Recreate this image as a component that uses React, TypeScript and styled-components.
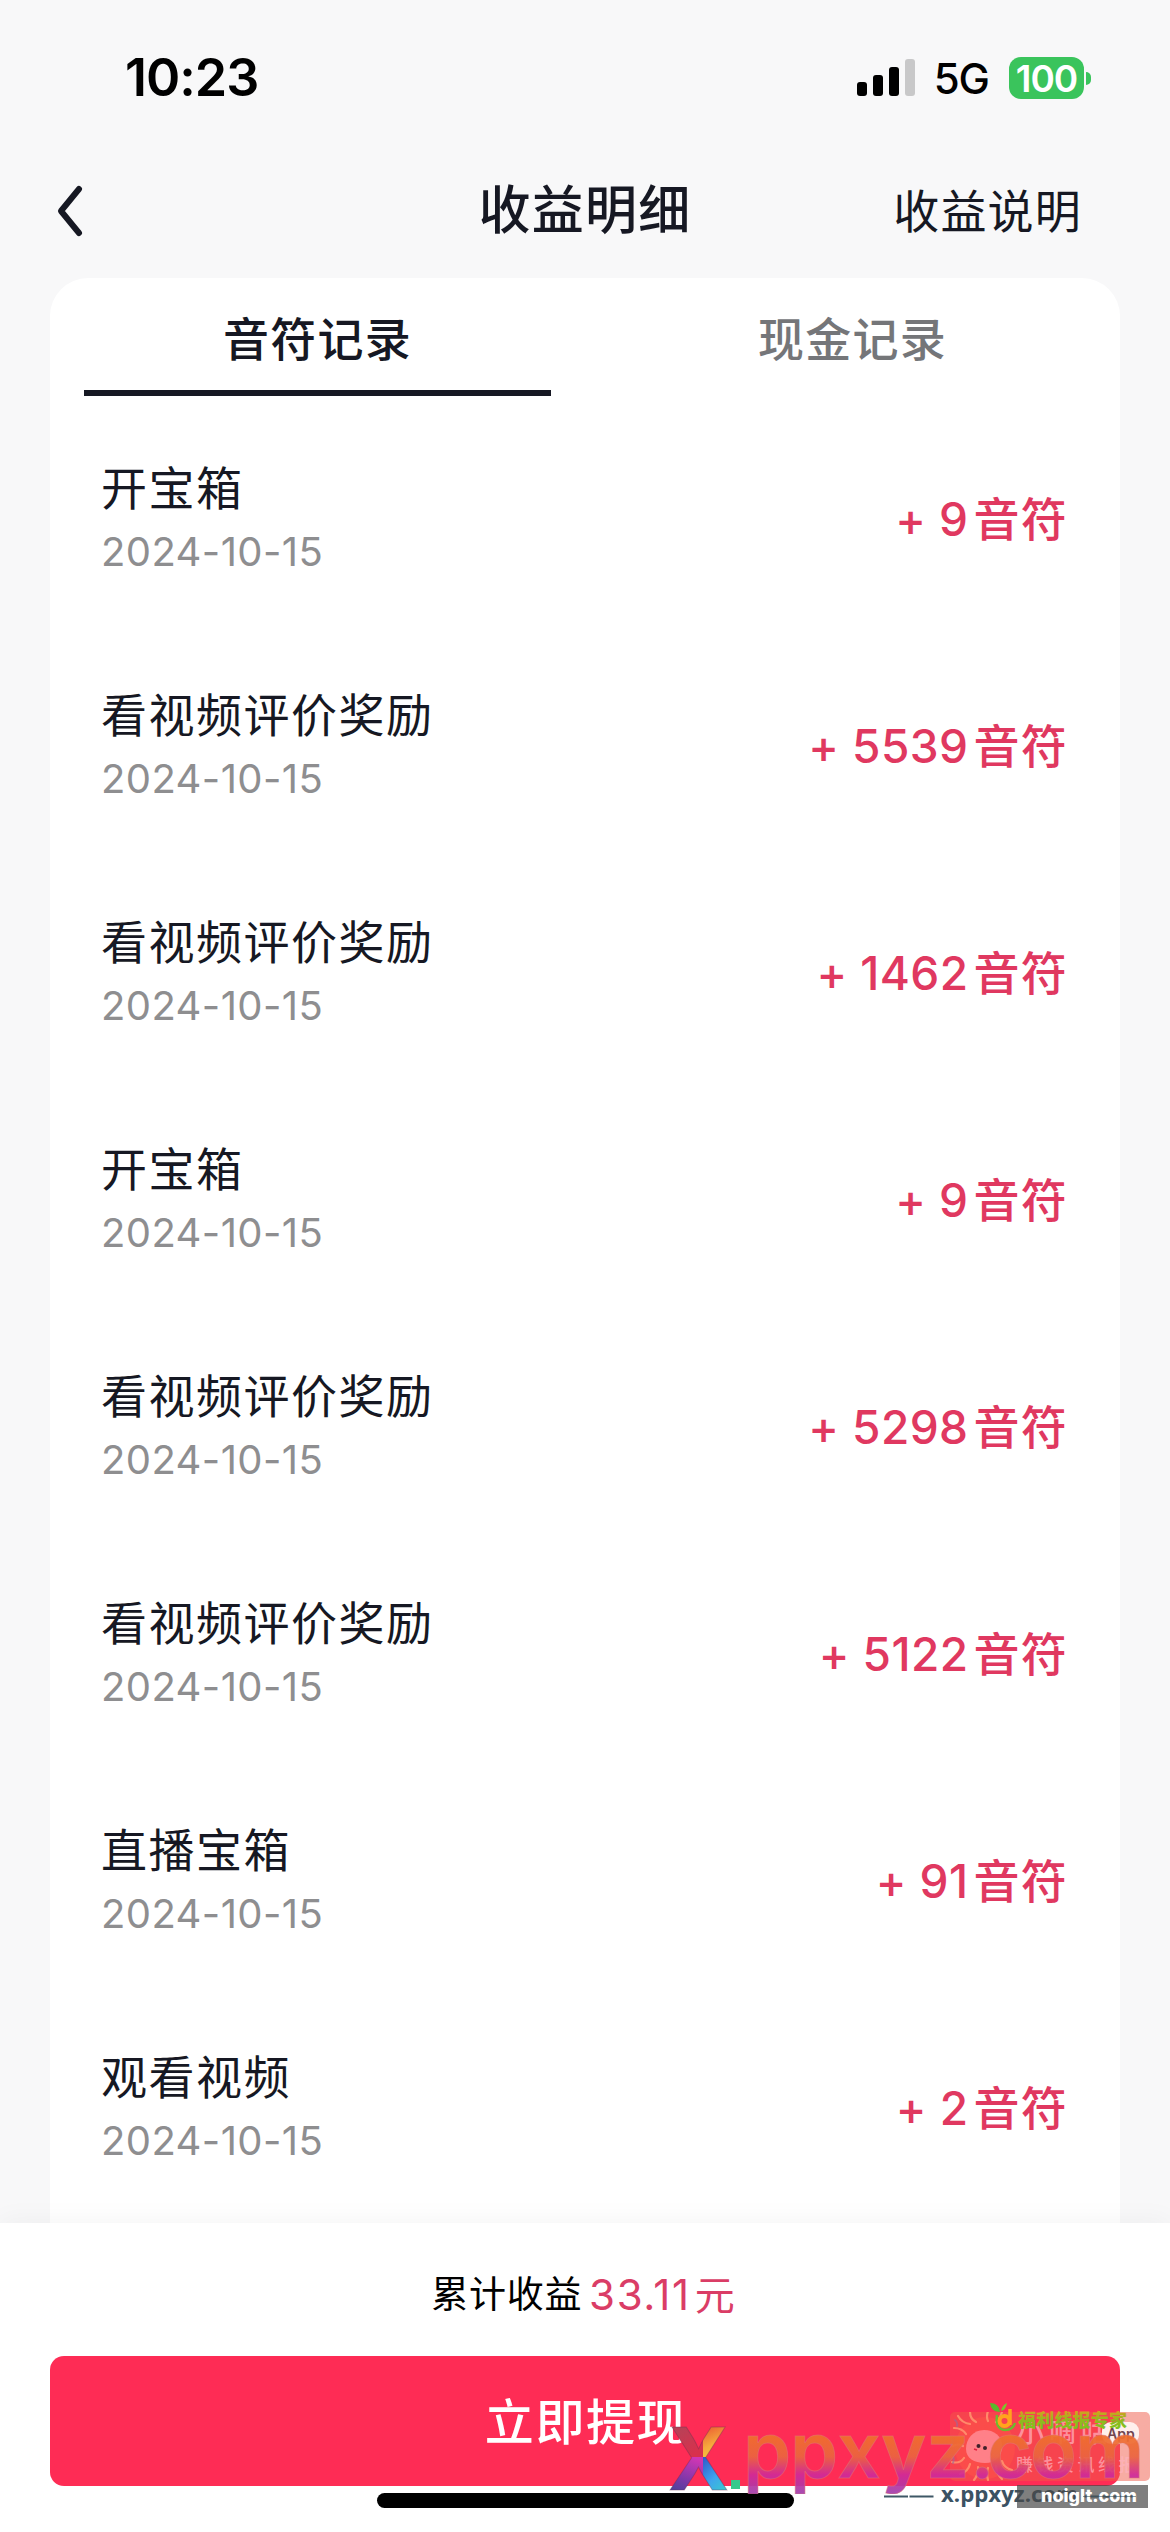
import React from "react";
import styled, { createGlobalStyle } from "styled-components";

const Global = createGlobalStyle`
  * { box-sizing: border-box; }
  body { margin: 0; background: #f8f8f9; }
`;

const Screen = styled.div`
  position: relative;
  display: flex;
  flex-direction: column;
  width: 1170px;
  height: 2532px;
  overflow: hidden;
  background: #f8f8f9;
  color: #161823;
  font-family: Inter, "Noto Sans CJK SC", sans-serif;
`;

const StatusBar = styled.header`
  display: flex;
  align-items: center;
  justify-content: space-between;
  height: 156px;
  padding: 0 79px 0 125px;
  color: #000;
`;

const Clock = styled.span`
  font-size: 52px;
  font-weight: 600;
  line-height: 60px;
  letter-spacing: -1px;
`;

const StatusIcons = styled.div`
  display: flex;
  align-items: center;
`;

const Network = styled.span`
  margin: 2px 20px 0 18px;
  font-size: 42px;
  font-weight: 500;
  line-height: 50px;
  letter-spacing: -1px;
`;

const Battery = styled.div`
  display: flex;
  align-items: center;
  justify-content: center;
  width: 75px;
  height: 42px;
  border-radius: 12px;
  background: #3ac45c;
  color: #fff;
  font-size: 37px;
  font-weight: 600;
  letter-spacing: -1px;
`;

const BatteryTip = styled.div`
  width: 5px;
  height: 13px;
  margin-left: 2px;
  border-radius: 0 6px 6px 0;
  background: #3ac45c;
`;

const NavBar = styled.nav`
  display: grid;
  grid-template-columns: 1fr auto 1fr;
  align-items: center;
  height: 122px;
  padding: 0 88px 12px 54px;
`;

const BackButton = styled.button`
  display: flex;
  padding: 0;
  border: 0;
  background: none;
`;

const Title = styled.h1`
  margin: 0 -34px 0 0;
  font-size: 52px;
  font-weight: 500;
  line-height: 70px;
  letter-spacing: 1.3px;
`;

const HelpLink = styled.a`
  justify-self: end;
  font-size: 46px;
  line-height: 66px;
  letter-spacing: 1.2px;
`;

const Card = styled.main`
  flex: 1;
  min-height: 0;
  margin: 0 50px;
  overflow: hidden;
  border-radius: 38px 38px 0 0;
  background: #fff;
`;

const Tabs = styled.div`
  display: grid;
  grid-template-columns: 1fr 1fr;
  height: 118px;
`;

const Tab = styled.button<{ $active?: boolean }>`
  margin: 0 34px;
  padding: 10px 0 0;
  border: 0;
  border-bottom: 6px solid ${(p) => (p.$active ? "#161823" : "transparent")};
  background: none;
  color: ${(p) => (p.$active ? "#161823" : "#757679")};
  font: 500 46px/66px Inter, "Noto Sans CJK SC", sans-serif;
  letter-spacing: 1.2px;
`;

const Records = styled.ul`
  margin: 0;
  padding: 9px 0 0;
  list-style: none;
`;

const Record = styled.li`
  display: flex;
  align-items: center;
  justify-content: space-between;
  height: 227px;
  padding: 0 52px 0 51px;
`;

const RecordName = styled.div`
  font-size: 46px;
  line-height: 66px;
  letter-spacing: 1.5px;
`;

const RecordDate = styled.div`
  color: #8e8e90;
  font-size: 40px;
  line-height: 62px;
  letter-spacing: 0.4px;
`;

const Amount = styled.div`
  display: flex;
  align-items: center;
  color: #e03860;
  font-size: 46px;
  font-weight: 500;
  line-height: 66px;
`;

const Points = styled.span`
  margin-right: 5px;
  letter-spacing: 0.4px;
`;

const Unit = styled.span`
  letter-spacing: 1.3px;
`;

const Footer = styled.footer`
  position: relative;
  height: 309px;
  padding: 41px 50px 0;
  background: #fff;
  box-shadow: 0 -2px 26px rgba(0, 0, 0, 0.045);
`;

const Total = styled.div`
  display: flex;
  justify-content: center;
  height: 92px;
  color: #000;
  font-size: 37px;
  line-height: 62px;
  letter-spacing: 0.7px;
`;

const TotalValue = styled.span`
  margin: 0 4px 0 7px;
  color: #da3d66;
  font-size: 42px;
  letter-spacing: 1.6px;
`;

const TotalUnit = styled.span`
  margin-left: 4px;
  font-size: 40px;
  letter-spacing: 0;
`;

const Withdraw = styled.button`
  display: block;
  width: 1070px;
  height: 130px;
  padding: 3px 0 0 2px;
  border: 0;
  border-radius: 14px;
  background: #fe2c55;
  color: #fff;
  font: 500 49px/127px Inter, "Noto Sans CJK SC", sans-serif;
  letter-spacing: 1.6px;
`;

const HomeIndicator = styled.div`
  width: 417px;
  height: 15px;
  margin: 7px auto 0;
  border-radius: 8px;
  background: #000;
`;

const Marks = styled.svg`
  position: absolute;
  left: 660px;
  top: 2392px;
`;

const records = [
  ["开宝箱", "9"],
  ["看视频评价奖励", "5539"],
  ["看视频评价奖励", "1462"],
  ["开宝箱", "9"],
  ["看视频评价奖励", "5298"],
  ["看视频评价奖励", "5122"],
  ["直播宝箱", "91"],
  ["观看视频", "2"],
];

const cjk = '"Noto Sans CJK SC", sans-serif';

function Watermarks() {
  return (
    <Marks width="510" height="140" viewBox="660 2392 510 140">
      <defs>
        <linearGradient id="word" x1="0" y1="2434" x2="0" y2="2494" gradientUnits="userSpaceOnUse">
          <stop offset="0" stopColor="#f0702a" />
          <stop offset="0.38" stopColor="#ea6440" />
          <stop offset="0.68" stopColor="#d02a98" />
          <stop offset="1" stopColor="#a040ac" />
        </linearGradient>
        <linearGradient id="rose" x1="0" y1="0" x2="0.6" y2="1">
          <stop offset="0" stopColor="#a84a5c" />
          <stop offset="1" stopColor="#d8304c" />
        </linearGradient>
        <linearGradient id="gold" x1="0.2" y1="0" x2="0.6" y2="1">
          <stop offset="0" stopColor="#e84a30" />
          <stop offset="0.6" stopColor="#f6a83c" />
          <stop offset="1" stopColor="#f6d040" />
        </linearGradient>
        <linearGradient id="sky" x1="0" y1="0" x2="0.8" y2="1">
          <stop offset="0" stopColor="#2f58c8" />
          <stop offset="0.5" stopColor="#3fa4ee" />
          <stop offset="1" stopColor="#36d6c4" />
        </linearGradient>
        <linearGradient id="violet" x1="0.7" y1="0" x2="0.3" y2="1">
          <stop offset="0" stopColor="#d036b4" />
          <stop offset="0.6" stopColor="#7a38a8" />
          <stop offset="1" stopColor="#3d4698" />
        </linearGradient>
        <pattern id="facets" x="664" y="2420" width="70" height="76" patternUnits="userSpaceOnUse">
          <path d="M0 0h41v37H0z" fill="url(#rose)" />
          <path d="M39 0h31v37H39z" fill="url(#gold)" />
          <path d="M0 37h41v39H0z" fill="url(#violet)" />
          <path d="M39 37h31v39H39z" fill="url(#sky)" />
        </pattern>
        <clipPath id="wordClip">
          <rect x="740" y="2430" width="410" height="64" />
        </clipPath>
        <clipPath id="badgeClip">
          <rect x="950" y="2412" width="200" height="69" rx="5" />
        </clipPath>
        <linearGradient id="leafText" x1="0" y1="2411" x2="0" y2="2430" gradientUnits="userSpaceOnUse">
          <stop offset="0" stopColor="#d8a020" />
          <stop offset="0.45" stopColor="#93b81e" />
          <stop offset="1" stopColor="#7cc31e" />
        </linearGradient>
      </defs>

      <rect x="950" y="2412" width="200" height="69" rx="5" fill="#f05a48" fillOpacity="0.5" />
      <g clipPath="url(#badgeClip)" fill="none" strokeLinecap="round">
        <ellipse cx="985" cy="2448" rx="30" ry="31" fill="#fb4c4a" />
        <path d="M954 2428q8 0 12 6M958 2416q4 7 12 8M970 2412q0 7 6 10M988 2411q-2 6 0 10M1002 2412q-2 7-6 10M953 2446q6-3 10 0M952 2462q8 2 12-4M960 2474q8-2 10-10M974 2480q5-6 4-13M988 2480q-2-7 0-12M1002 2479q-6-6-6-13M1012 2470q-8-2-10-9" stroke="#ff8a6a" strokeWidth="2.200" />
        <path d="M951 2437q3 3 1 8M951 2454q4 3 2 9M955 2420q3 2 2 6" stroke="#9a6a9a" strokeWidth="2" strokeOpacity="0.6" />
      </g>
      <path d="M966 2449c0-10 7-19 18-19 10 0 18 6 18 16s-6 17-17 17-19-5-19-14z" fill="#ff8088" />
      <circle cx="978.500" cy="2446" r="2" fill="#40202a" />
      <circle cx="985" cy="2448" r="2" fill="#40202a" />
      <path d="M974 2449l3 1" stroke="#e02040" strokeWidth="1.500" />

      <g fill="#ffb4c0" fillOpacity="0.7" fontFamily={cjk} fontWeight="500">
        <text x="1017" y="2442" fontSize="27" letterSpacing="5">小嘀咕</text>
        <text x="1016" y="2471" fontSize="17" letterSpacing="3.500">賺钱资讯线报</text>
      </g>
      <rect x="1102" y="2422" width="37" height="22" rx="9" fill="#fff0ec" />
      <text x="1107" y="2439" fontSize="14" fontWeight="600" fill="#704650" fontFamily="Inter, sans-serif">App</text>

      <path d="M990 2403q9 0 10 9-9 0-10-9z" fill="#5cb82c" />
      <path d="M1001 2411q1-6 6-8-1 7-6 8z" fill="#7cc42c" />
      <path d="M997 2415q-2 14 8 15 8 0 10-7" fill="none" stroke="#6cbc2c" strokeWidth="2.500" />
      <circle cx="1004.500" cy="2421" r="5" fill="none" stroke="#ffa41c" strokeWidth="4" />
      <path d="M1010 2409v16" stroke="#ffa41c" strokeWidth="3.500" />
      <text x="1018" y="2427" fontSize="18" fontWeight="900" textLength="109" fill="url(#leafText)" fontFamily={cjk}>福利线报专家</text>

      <g clipPath="url(#wordClip)">
        <text
          x="743 790 837 881 926 970 987 1030 1075"
          y="2478"
          fontSize="77"
          fontWeight="600"
          fill="url(#word)"
          fillOpacity="0.93"
          stroke="#e07878"
          strokeOpacity="0.5"
          strokeWidth="1"
          fontFamily="Inter, sans-serif"
        >
          ppxyz.com
        </text>
      </g>
      <text x="668" y="2490" fontSize="87" fontWeight="700" textLength="61" lengthAdjust="spacingAndGlyphs" fill="url(#facets)" stroke="#6a3050" strokeOpacity="0.4" strokeWidth="1" fontFamily="Inter, sans-serif">X</text>
      <rect x="731" y="2480" width="9" height="9" fill="#36c98c" />

      <path d="M884 2496.500h24M909.500 2496.500h24M1083 2496.500h53" stroke="#3f5866" strokeWidth="1.800" />
      <text x="941" y="2502" fontSize="22" fontWeight="700" textLength="137" lengthAdjust="spacingAndGlyphs" fill="#3b5263" fontFamily="Open Sans, sans-serif">x.ppxyz.com</text>
      <rect x="1017" y="2485" width="131" height="23" fill="#484848" fillOpacity="0.7" />
      <text x="1041" y="2502" fontSize="18" fontWeight="800" textLength="96" lengthAdjust="spacingAndGlyphs" fill="#fff" fontFamily="Inter, sans-serif">noiglt.com</text>
      <path d="M1083 2496.500h53" stroke="#3f5866" strokeWidth="1" strokeOpacity="0.6" />
    </Marks>
  );
}

export default function App() {
  return (
    <Screen>
      <Global />
      <StatusBar>
        <Clock>10:23</Clock>
        <StatusIcons>
          <svg width="59" height="38" viewBox="0 0 59 38">
            <rect x="0" y="23" width="10" height="14" rx="3" />
            <rect x="16" y="16" width="10" height="21" rx="3" />
            <rect x="32" y="8" width="10" height="29" rx="3" />
            <rect x="48" y="0" width="10" height="37" rx="3" fill="#c8c8c9" />
          </svg>
          <Network>5G</Network>
          <Battery>100</Battery>
          <BatteryTip />
        </StatusIcons>
      </StatusBar>
      <NavBar>
        <BackButton aria-label="返回">
          <svg width="30" height="54" viewBox="0 0 30 54" fill="none" stroke="#161823" strokeWidth="6" strokeLinecap="round" strokeLinejoin="round">
            <path d="M25 5 7 27l18 22" />
          </svg>
        </BackButton>
        <Title>收益明细</Title>
        <HelpLink>收益说明</HelpLink>
      </NavBar>
      <Card>
        <Tabs>
          <Tab $active>音符记录</Tab>
          <Tab>现金记录</Tab>
        </Tabs>
        <Records>
          {records.map(([name, points], i) => (
            <Record key={i}>
              <div>
                <RecordName>{name}</RecordName>
                <RecordDate>2024-10-15</RecordDate>
              </div>
              <Amount>
                <Points>+ {points}</Points>
                <Unit>音符</Unit>
              </Amount>
            </Record>
          ))}
        </Records>
      </Card>
      <Footer>
        <Total>
          累计收益
          <TotalValue>
            33.11<TotalUnit>元</TotalUnit>
          </TotalValue>
        </Total>
        <Withdraw>立即提现</Withdraw>
        <HomeIndicator />
      </Footer>
      <Watermarks />
    </Screen>
  );
}
